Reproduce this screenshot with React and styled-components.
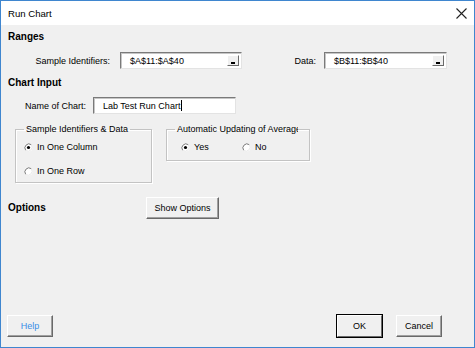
import React from 'react';
import styled, { createGlobalStyle } from 'styled-components';

const GlobalStyle = createGlobalStyle`
    html, body {
        margin: 0;
        padding: 0;
        background: #ffffff;
    }
    * {
        box-sizing: border-box;
    }
`;

const Window = styled.div`
    display: flex;
    flex-direction: column;
    width: 475px;
    height: 348px;
    border: 1px solid #3f86cf;
    background: #f0f0f0;
    font-family: "Liberation Sans", Arial, sans-serif;
    font-size: 9px;
    color: #000;
`;

const TitleBar = styled.div`
    display: flex;
    align-items: center;
    justify-content: space-between;
    height: 24px;
    padding: 0 7px 0 7px;
    background: #ffffff;
    font-size: 9.6px;
`;

const Body = styled.div`
    display: flex;
    flex-direction: column;
    flex: 1;
    padding: 0 0 10px 7px;
`;

const Heading = styled.div`
    font-weight: 700;
    font-size: 10px;
    line-height: 12px;
    margin-top: ${({ top }) => top}px;
`;

const Row = styled.div`
    display: flex;
    align-items: center;
    margin-top: ${({ top }) => top || 0}px;
`;

const Label = styled.div`
    width: ${({ width }) => width}px;
    margin-left: ${({ left }) => left || 0}px;
    text-align: right;
    white-space: nowrap;
`;

const TextBox = styled.div`
    position: relative;
    display: flex;
    align-items: center;
    width: ${({ width }) => width}px;
    height: 17px;
    margin-left: ${({ left }) => left || 0}px;
    padding-left: ${({ pad }) => pad || 9}px;
    background: #ffffff;
    border-style: solid;
    border-width: 1px;
    border-color: #7a7a7a #e3e3e3 #e3e3e3 #7a7a7a;
    box-shadow: inset 1px 1px 0 #c6c6c6;
    white-space: nowrap;
`;

const Caret = styled.span`
    display: inline-block;
    width: 1px;
    height: 11px;
    background: #000;
    margin-left: 1px;
`;

const PickButton = styled.span`
    position: absolute;
    right: 2px;
    top: 2px;
    width: 12px;
    height: 11px;
    background: #f0f0f0;
    border-style: solid;
    border-width: 1px;
    border-color: #ffffff #6a6a6a #6a6a6a #ffffff;

    &::after {
        content: '';
        position: absolute;
        left: 3px;
        bottom: 1px;
        width: 4px;
        height: 2px;
        background: #000;
    }
`;

const Groups = styled.div`
    display: flex;
    align-items: flex-start;
    margin-top: 10px;
`;

const GroupBox = styled.fieldset`
    width: ${({ width }) => width}px;
    height: ${({ height }) => height}px;
    margin: 0 0 0 ${({ left }) => left}px;
    padding: 0 0 0 8px;
    border: 1px solid #c3c3c3;
    box-shadow: 1px 1px 0 #ffffff, inset 1px 1px 0 #ffffff;
    min-width: 0;
`;

const Legend = styled.legend`
    padding: 0 2px;
    line-height: 11px;
    white-space: nowrap;
    overflow: hidden;
    max-width: ${({ max }) => max || 200}px;
`;

const RadioRow = styled.div`
    display: flex;
    align-items: center;
    height: 12px;
    margin-top: ${({ top }) => top}px;
`;

const RadioItem = styled.label`
    display: flex;
    align-items: center;
    gap: 4px;
    width: ${({ width }) => width ? `${width}px` : 'auto'};
    margin-left: ${({ left }) => left || 0}px;
    white-space: nowrap;
`;

const Radio = ({ checked }) => (
    <svg width="9" height="9" viewBox="0 0 9 9">
        <circle cx="4.5" cy="4.5" r="4" fill="#ffffff" />
        <path d="M7.3 1.7 A4 4 0 0 0 1.7 7.3" stroke="#777" strokeWidth="1" fill="none" />
        <path d="M1.7 7.3 A4 4 0 0 0 7.3 1.7" stroke="#e8e8e8" strokeWidth="1" fill="none" />
        {checked && <circle cx="4.5" cy="4.5" r="1.6" fill="#000" />}
    </svg>
);

const Button = styled.div`
    display: flex;
    align-items: center;
    justify-content: center;
    width: ${({ width }) => width}px;
    height: 22px;
    margin-left: ${({ left }) => left || 0}px;
    background: #f0f0f0;
    color: ${({ textColor }) => textColor || '#000'};
    border-style: solid;
    border-width: 1px;
    border-color: #ffffff #696969 #696969 #ffffff;
    box-shadow: ${({ primary }) => primary ? '0 0 0 1px #000' : 'inset -1px -1px 0 #a0a0a0'};
    white-space: nowrap;
`;

const Footer = styled.div`
    display: flex;
    align-items: center;
    margin-top: auto;
    margin-left: -1px;
`;

const CloseIcon = () => (
    <svg width="11" height="11" viewBox="0 0 11 11">
        <path d="M0.5 0.5 L10.5 10.5 M10.5 0.5 L0.5 10.5" stroke="#222" strokeWidth="1.1" />
    </svg>
);

const App = () => {
    return (
        <>
            <GlobalStyle />
            <Window>
                <TitleBar>
                    <span>Run Chart</span>
                    <CloseIcon />
                </TitleBar>
                <Body>
                    <Heading top={6}>Ranges</Heading>
                    <Row top={9}>
                        <Label left={22} width={80}>Sample Identifiers:</Label>
                        <TextBox left={10} width={122}>
                            $A$11:$A$40
                            <PickButton />
                        </TextBox>
                        <Label left={8} width={66}>Data:</Label>
                        <TextBox left={8} width={123}>
                            $B$11:$B$40
                            <PickButton />
                        </TextBox>
                    </Row>

                    <Heading top={8}>Chart Input</Heading>
                    <Row top={8}>
                        <Label left={8} width={70}>Name of Chart:</Label>
                        <TextBox left={7} width={143}>
                            Lab Test Run Chart<Caret />
                        </TextBox>
                    </Row>

                    <Groups>
                        <GroupBox left={7} width={137} height={59}>
                            <Legend>Sample Identifiers &amp; Data</Legend>
                            <RadioRow top={6}>
                                <RadioItem><Radio checked />In One Column</RadioItem>
                            </RadioRow>
                            <RadioRow top={12}>
                                <RadioItem><Radio />In One Row</RadioItem>
                            </RadioRow>
                        </GroupBox>
                        <GroupBox left={14} width={144} height={37}>
                            <Legend max={123}>Automatic Updating of Average</Legend>
                            <RadioRow top={6}>
                                <RadioItem left={6} width={61}><Radio checked />Yes</RadioItem>
                                <RadioItem><Radio />No</RadioItem>
                            </RadioRow>
                        </GroupBox>
                    </Groups>

                    <Row top={14}>
                        <Heading as="div" top={0} style={{ width: 138 }}>Options</Heading>
                        <Button width={73}>Show Options</Button>
                    </Row>

                    <Footer>
                        <Button width={46} textColor="#3a8ee6">Help</Button>
                        <Button width={45} left={284} primary>OK</Button>
                        <Button width={46} left={14}>Cancel</Button>
                    </Footer>
                </Body>
            </Window>
        </>
    );
};

export default App;
